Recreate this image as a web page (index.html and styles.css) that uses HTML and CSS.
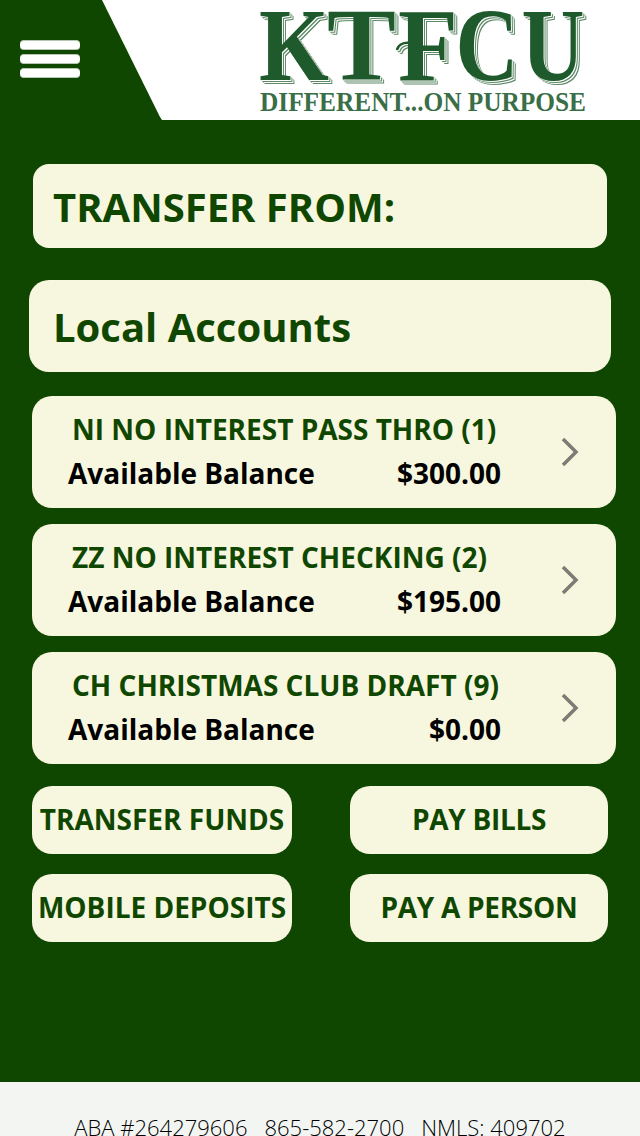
FILE: index.html
```html
<!DOCTYPE html>
<html lang="en">
<head>
    <meta charset="UTF-8">
    <meta name="viewport" content="width=device-width, initial-scale=1.0">
    <title>KTFCU - Transfer From</title>
    <link rel="stylesheet" href="styles.css">
</head>
<body>

<!-- Header -->
<header class="header">
    <button class="menu-button" aria-label="Menu">
        <span></span>
        <span></span>
        <span></span>
    </button>
    <div class="banner">
        <svg class="logo" width="340" height="120" viewBox="0 0 340 120">
            <g class="logo-name">
                <text x="9" y="80" textLength="70" lengthAdjust="spacingAndGlyphs">K</text>
                <text x="77" y="80" textLength="69" lengthAdjust="spacingAndGlyphs">T</text>
                <text x="148" y="80" textLength="60" lengthAdjust="spacingAndGlyphs">F</text>
                <text x="205.5" y="80" textLength="63" lengthAdjust="spacingAndGlyphs">C</text>
                <text x="271.5" y="80" textLength="63" lengthAdjust="spacingAndGlyphs">U</text>
                <path class="logo-curl" d="M160 43C153 42 148 45 147 50"/>
            </g>
            <text class="logo-tagline" x="10" y="111" textLength="326" lengthAdjust="spacingAndGlyphs">DIFFERENT...ON PURPOSE</text>
        </svg>
    </div>
</header>

<!-- Accounts -->
<main class="content">
    <h1 class="page-title">TRANSFER FROM:</h1>
    <h2 class="section-title">Local Accounts</h2>

    <div class="accounts">
        <div class="account">
            <div class="account-info">
                <div class="account-name">NI NO INTEREST PASS THRO (1)</div>
                <div class="balance"><span>Available Balance</span><span>$300.00</span></div>
            </div>
            <svg class="chevron" width="20" height="32" viewBox="0 0 20 32"><path d="M3 3L16 16L3 29"/></svg>
        </div>
        <div class="account">
            <div class="account-info">
                <div class="account-name">ZZ NO INTEREST CHECKING (2)</div>
                <div class="balance"><span>Available Balance</span><span>$195.00</span></div>
            </div>
            <svg class="chevron" width="20" height="32" viewBox="0 0 20 32"><path d="M3 3L16 16L3 29"/></svg>
        </div>
        <div class="account">
            <div class="account-info">
                <div class="account-name">CH CHRISTMAS CLUB DRAFT (9)</div>
                <div class="balance"><span>Available Balance</span><span>$0.00</span></div>
            </div>
            <svg class="chevron" width="20" height="32" viewBox="0 0 20 32"><path d="M3 3L16 16L3 29"/></svg>
        </div>
    </div>

    <div class="actions">
        <button>TRANSFER FUNDS</button>
        <button class="pay">PAY BILLS</button>
        <button>MOBILE DEPOSITS</button>
        <button class="pay">PAY A PERSON</button>
    </div>
</main>

<!-- Footer -->
<footer class="footer">
    <span>ABA #264279606</span>
    <span>865-582-2700</span>
    <span>NMLS: 409702</span>
</footer>

</body>
</html>
```

FILE: styles.css
```css
* {
    box-sizing: border-box;
}
body {
    margin: 0;
    height: 1136px;
    overflow: hidden;
    display: flex;
    flex-direction: column;
    background: #104700;
    font-family: "Open Sans", "Noto Sans", sans-serif;
}
button {
    border: none;
    font-family: inherit;
    cursor: pointer;
}

.header {
    height: 120px;
    flex: none;
    display: flex;
}
.menu-button {
    width: 100px;
    padding: 40px 20px 42px;
    background: none;
    display: flex;
    flex-direction: column;
    justify-content: space-between;
}
.menu-button span {
    display: block;
    width: 60px;
    height: 10px;
    border-radius: 4px;
    background: #fff;
    border: 1px solid #b7c8b2;
    border-width: 1px 0;
}
.banner {
    flex: 1;
    padding-left: 150px;
    background: #fff;
    clip-path: polygon(2px 0, 100% 0, 100% 100%, 62px 100%, 60px 117px);
}
.logo {
    display: block;
}
.logo-name {
    font-family: "Liberation Serif", serif;
    font-size: 103px;
    font-weight: bold;
    fill: #1f5a2c;
    filter: drop-shadow(1px 1px 0 #fff) drop-shadow(1px 1px 0 #5d8966) drop-shadow(1px 1px 0 #fff) drop-shadow(1px 1px 0 #5d8966);
}
.logo-curl {
    fill: none;
    stroke: #1f5a2c;
    stroke-width: 2.5;
}
.logo-tagline {
    font-family: "Liberation Serif", serif;
    font-size: 27px;
    font-weight: bold;
    fill: #3a6e47;
}

.content {
    flex: none;
    height: 962px;
    padding: 44px 24px 0 29px;
}
.page-title, .section-title {
    margin: 0;
    font-size: 40px;
    font-weight: bold;
    color: #104700;
    background: #f7f6de;
}
.page-title {
    width: 574px;
    height: 84px;
    margin: 0 0 32px 4px;
    padding-left: 20px;
    line-height: 86px;
    border-radius: 16px;
}
.section-title {
    width: 582px;
    height: 92px;
    padding-left: 24px;
    line-height: 94px;
    border-radius: 20px;
}

.accounts {
    display: flex;
    flex-direction: column;
    gap: 16px;
    margin: 24px 0 22px 3px;
}
.account {
    height: 112px;
    display: flex;
    align-items: center;
    justify-content: space-between;
    padding: 0 36px;
    border-radius: 20px;
    background: #f7f6de;
    font-size: 28px;
    font-weight: bold;
    line-height: 44px;
}
.account-info {
    width: 433px;
    padding-bottom: 2px;
}
.account-name {
    padding-left: 4px;
    color: #104700;
    white-space: nowrap;
}
.balance {
    display: flex;
    justify-content: space-between;
    color: #000;
}
.chevron {
    fill: none;
    stroke: #7d7b75;
    stroke-width: 3.5;
}

.actions {
    display: grid;
    grid-template-columns: 260px 258px;
    grid-auto-rows: 68px;
    gap: 20px 58px;
    margin-left: 3px;
}
.actions button {
    padding: 0 0 2px;
    border-radius: 20px;
    background: #f7f6de;
    color: #104700;
    font-size: 28px;
    font-weight: bold;
    white-space: nowrap;
}
.actions .pay {
    letter-spacing: -0.3px;
}

.footer {
    flex: 1;
    display: flex;
    justify-content: center;
    gap: 17px;
    padding-top: 30px;
    background: #f3f5f3;
    color: #000;
    font-size: 22px;
    font-weight: 300;
    line-height: 30px;
}
```
